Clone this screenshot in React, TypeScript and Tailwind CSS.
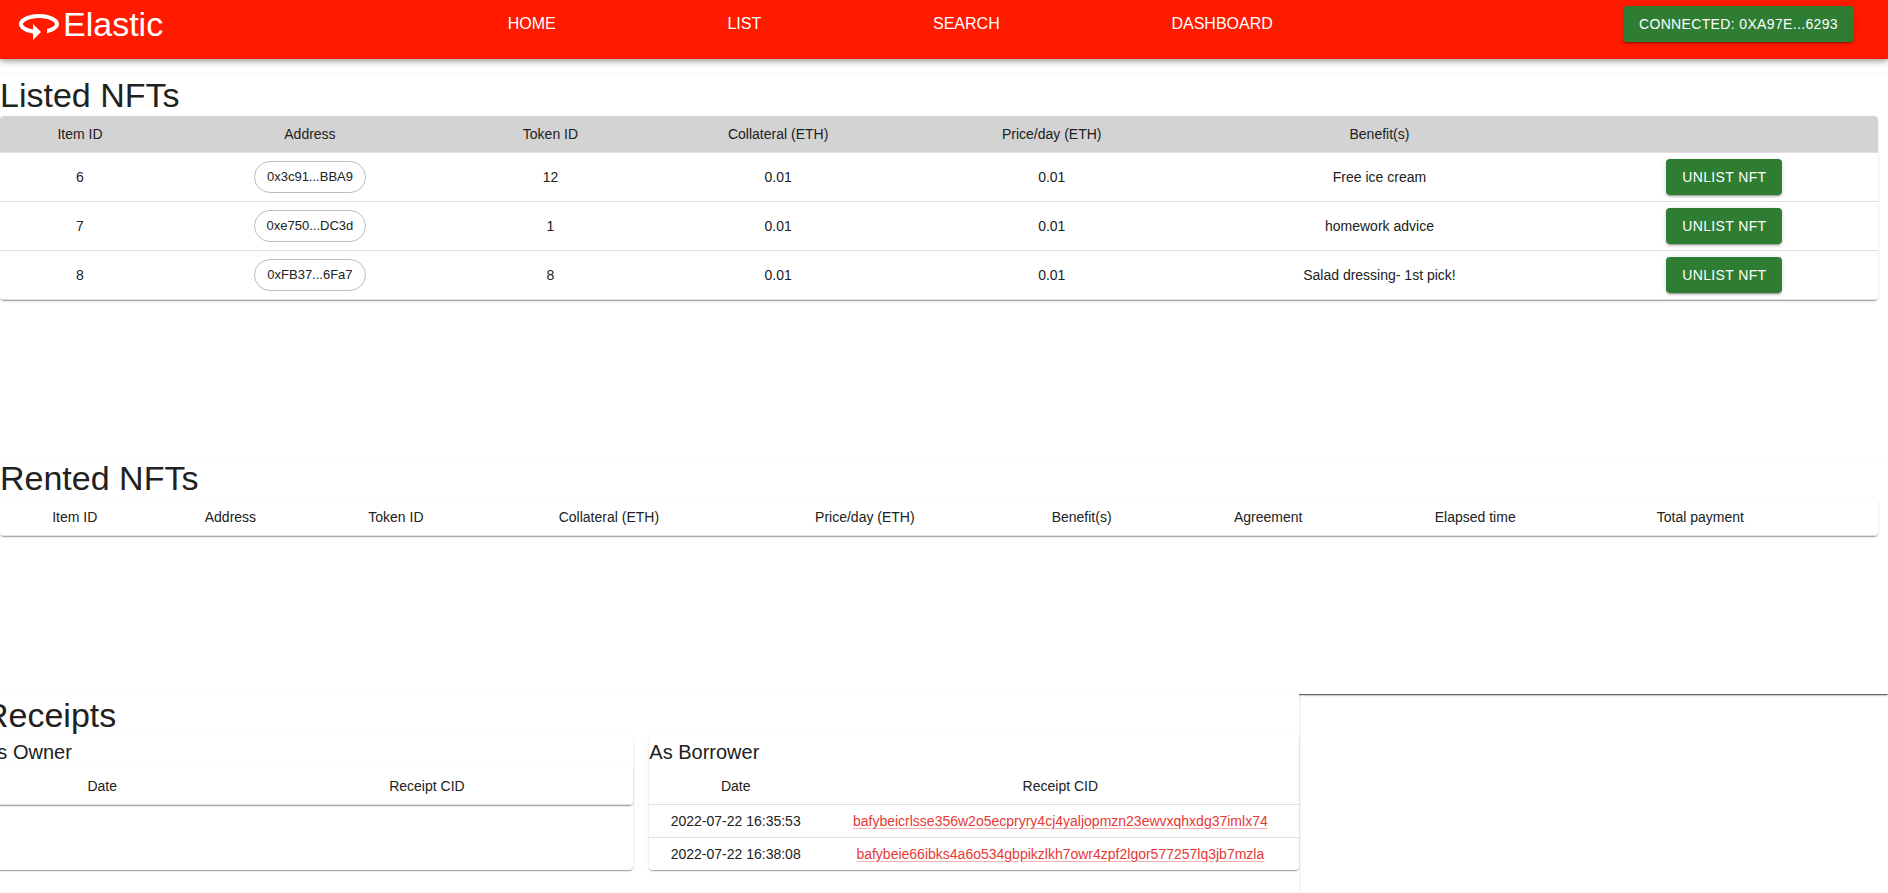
import type { ReactNode } from "react"

const navItems = ["HOME", "LIST", "SEARCH", "DASHBOARD"]

const listed = [
  { id: 6, address: "0x3c91...BBA9", tokenId: 12, collateral: "0.01", price: "0.01", benefits: "Free ice cream" },
  { id: 7, address: "0xe750...DC3d", tokenId: 1, collateral: "0.01", price: "0.01", benefits: "homework advice" },
  { id: 8, address: "0xFB37...6Fa7", tokenId: 8, collateral: "0.01", price: "0.01", benefits: "Salad dressing- 1st pick!" },
]

const listedColumns = ["Item ID", "Address", "Token ID", "Collateral (ETH)", "Price/day (ETH)", "Benefit(s)", ""]

const rentedColumns = [
  "Item ID",
  "Address",
  "Token ID",
  "Collateral (ETH)",
  "Price/day (ETH)",
  "Benefit(s)",
  "Agreement",
  "Elapsed time",
  "Total payment",
  "",
]

const borrowerReceipts = [
  { date: "2022-07-22 16:35:53", cid: "bafybeicrlsse356w2o5ecpryry4cj4yaljopmzn23ewvxqhxdg37imlx74" },
  { date: "2022-07-22 16:38:08", cid: "bafybeie66ibks4a6o534gbpikzlkh7owr4zpf2lgor577257lq3jb7mzla" },
]

function Paper({ className = "", children }: { className?: string; children?: ReactNode }) {
  return (
    <div
      className={`bg-white shadow-[0_2px_1px_-1px_rgba(0,0,0,0.2),0_1px_1px_0_rgba(0,0,0,0.14),0_1px_3px_0_rgba(0,0,0,0.12)] ${className}`}
    >
      {children}
    </div>
  )
}

function GreenButton({ children }: { children: ReactNode }) {
  return (
    <button
      type="button"
      className="h-9 rounded bg-[#2e7d32] px-4 text-sm tracking-wide whitespace-nowrap text-white uppercase shadow-[0_3px_1px_-2px_rgba(0,0,0,0.2),0_2px_2px_0_rgba(0,0,0,0.14),0_1px_5px_0_rgba(0,0,0,0.12)]"
    >
      {children}
    </button>
  )
}

function DataTable({ columns, headClass = "", children }: { columns: string[]; headClass?: string; children?: ReactNode }) {
  return (
    <table className="w-full text-center text-sm leading-6">
      <thead className={headClass}>
        <tr className="border-b border-[#e0e0e0]">
          {columns.map((column, i) => (
            <th key={i} scope="col" className="px-4 py-1.5 font-normal whitespace-nowrap">
              {column}
            </th>
          ))}
        </tr>
      </thead>
      <tbody>{children}</tbody>
    </table>
  )
}

function Header() {
  return (
    <header className="relative flex items-center bg-[#ff1a00] pr-[34px] pb-[11px] pl-[15px] text-white shadow-[0_2px_4px_-1px_rgba(0,0,0,0.2),0_4px_5px_0_rgba(0,0,0,0.14),0_1px_10px_0_rgba(0,0,0,0.12)]">
      <a href="#" className="flex h-12 items-center">
        <svg viewBox="0 0 24 24" className="size-12" fill="currentColor" aria-hidden="true">
          <path d="M12 7C6.48 7 2 9.24 2 12c0 2.24 2.94 4.13 7 4.77V20l4-4-4-4v2.73c-3.15-.56-5-1.9-5-2.73 0-1.06 3.04-3 8-3s8 1.94 8 3c0 .73-1.46 1.89-4 2.53v2.05c3.53-.77 6-2.53 6-4.58 0-2.76-4.48-5-10-5z" />
        </svg>
        <span className="text-[34px] leading-[42px]">Elastic</span>
      </a>
      <nav className="mr-[9.7%] ml-[9.4%] flex flex-1 justify-evenly">
        {navItems.map((item) => (
          <a key={item} href="#">
            {item}
          </a>
        ))}
      </nav>
      <GreenButton>Connected: 0xa97e...6293</GreenButton>
    </header>
  )
}

export default function App() {
  return (
    <div className="flex min-h-screen flex-col overflow-x-hidden bg-white font-['Liberation_Sans',Arial,sans-serif] text-[#212121]">
      <Header />

      <main className="mt-[15px] flex flex-1 flex-col">
        <Paper>
          <Paper className="min-h-[383px]">
            <h1 className="text-[34px] leading-[42px]">Listed NFTs</h1>
            <Paper className="mr-2.5 overflow-hidden rounded">
              <DataTable columns={listedColumns} headClass="bg-[#d3d3d3]">
                {listed.map((nft) => (
                  <tr key={nft.id} className="border-b border-[#e0e0e0]">
                    <td className="px-4 py-1.5">{nft.id}</td>
                    <td className="px-4 py-1.5">
                      <span className="inline-flex h-8 items-center rounded-full border border-[#bdbdbd] px-3 align-middle text-[13px]">
                        {nft.address}
                      </span>
                    </td>
                    <td className="px-4 py-1.5">{nft.tokenId}</td>
                    <td className="px-4 py-1.5">{nft.collateral}</td>
                    <td className="px-4 py-1.5">{nft.price}</td>
                    <td className="px-4 py-1.5">{nft.benefits}</td>
                    <td className="px-4 py-1.5">
                      <GreenButton>Unlist NFT</GreenButton>
                    </td>
                  </tr>
                ))}
              </DataTable>
            </Paper>
          </Paper>

          <Paper className="min-h-[237px]">
            <h1 className="text-[34px] leading-[42px]">Rented NFTs</h1>
            <Paper className="mr-2.5 overflow-hidden rounded">
              <DataTable columns={rentedColumns} />
            </Paper>
          </Paper>
        </Paper>

        <Paper className="-ml-4 w-[calc(70%-7px)] flex-1">
          <h1 className="text-[34px] leading-[42px]">Receipts</h1>
          <div className="flex gap-4">
            <Paper className="flex-1 rounded">
              <h2 className="text-xl leading-8">As Owner</h2>
              <Paper className="rounded">
                <DataTable columns={["Date", "Receipt CID"]} />
              </Paper>
            </Paper>
            <Paper className="flex-1 rounded">
              <h2 className="text-xl leading-8">As Borrower</h2>
              <DataTable columns={["Date", "Receipt CID"]}>
                {borrowerReceipts.map((receipt) => (
                  <tr key={receipt.cid} className="border-b border-[#e0e0e0] leading-5 last:border-b-0">
                    <td className="px-4 py-1.5 whitespace-nowrap">{receipt.date}</td>
                    <td className="px-4 py-1.5">
                      <a href="#" className="text-[#e53935] underline decoration-[#e53935]/40 underline-offset-2">
                        {receipt.cid}
                      </a>
                    </td>
                  </tr>
                ))}
              </DataTable>
            </Paper>
          </div>
        </Paper>
      </main>
    </div>
  )
}
